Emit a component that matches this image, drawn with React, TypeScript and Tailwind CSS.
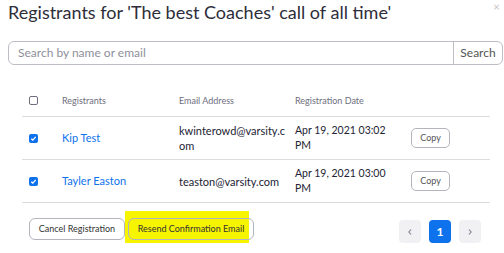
import React from "react";

const Check = ({ checked }: { checked: boolean }) =>
  checked ? (
    <span className="flex h-[9px] w-[9px] items-center justify-center rounded-[2px] bg-[#0e72ed]">
      <svg width="7" height="7" viewBox="0 0 8 8">
        <path d="M1.5 4.2 L3.2 5.8 L6.5 2.2" stroke="white" strokeWidth="1.5" fill="none" />
      </svg>
    </span>
  ) : (
    <span className="block h-[9px] w-[9px] rounded-[2px] border border-[#6e6e7e] bg-white" />
  );

const CopyBtn = () => (
  <button className="flex h-[20px] w-[39px] items-center justify-center rounded-[5px] border border-[#b4b4bc] bg-white text-[9px] text-[#555]">
    Copy
  </button>
);

export default function App() {
  return (
    <div
      className="relative h-[253px] w-[504px] overflow-hidden bg-white text-[#232333]"
      style={{ fontFamily: "Lato, 'Open Sans', sans-serif" }}
    >
      <span className="absolute right-[4px] top-[1px] text-[12px] leading-none text-[#c8c8c8]">×</span>
      <div className="pl-[8px] pt-[1px] text-[18px] leading-[22px] text-[#2e2e3a]">
        Registrants for 'The best Coaches' call of all time'
      </div>
      <div className="ml-[8px] mt-[18px] flex h-[24px] w-[495px] rounded-[6px] border border-[#bdbdc5]">
        <div className="flex flex-1 items-center pl-[9px] text-[12px] text-[#8f8f9a]">Search by name or email</div>
        <div className="flex w-[49px] items-center justify-center border-l border-[#bdbdc5] text-[12px] text-[#555]">
          Search
        </div>
      </div>
      <div className="ml-[22px] mt-[20px] w-[468px]">
        <div className="flex h-[32px] items-center border-b border-[#dcdce0] text-[9px] text-[#6e6e7e]">
          <div className="flex w-[40px] justify-start pl-[7px]">
            <Check checked={false} />
          </div>
          <div className="w-[117px]">Registrants</div>
          <div className="w-[116px]">Email Address</div>
          <div>Registration Date</div>
        </div>
        <div className="flex h-[43px] items-center border-b border-[#dcdce0] text-[11px]">
          <div className="flex w-[40px] justify-start pl-[7px]">
            <Check checked />
          </div>
          <div className="w-[117px] text-[11px] text-[#0e72ed]">Kip Test</div>
          <div className="w-[116px] leading-[15px]">
            kwinterowd@varsity.c
            <br />
            om
          </div>
          <div className="w-[116px] text-[10.5px] leading-[15px]">
            Apr 19, 2021 03:02
            <br />
            PM
          </div>
          <CopyBtn />
        </div>
        <div className="flex h-[43px] items-center border-b border-[#dcdce0] text-[11px]">
          <div className="flex w-[40px] justify-start pl-[7px]">
            <Check checked />
          </div>
          <div className="w-[117px] text-[11px] text-[#0e72ed]">Tayler Easton</div>
          <div className="w-[116px] leading-[15px]">teaston@varsity.com</div>
          <div className="w-[116px] text-[10.5px] leading-[15px]">
            Apr 19, 2021 03:00
            <br />
            PM
          </div>
          <CopyBtn />
        </div>
      </div>
      <div className="ml-[29px] mt-[14px] flex items-start">
        <button className="mt-[1px] flex h-[22px] w-[96px] items-center justify-center rounded-[6px] border border-[#b4b4bc] text-[9px] text-[#333]">
          Cancel Registration
        </button>
        <div className="relative ml-[3px]">
          <div className="absolute left-[-3px] top-[-6px] h-[32px] w-[124px] bg-[#f7f400]" />
          <button className="relative mt-[1px] flex h-[22px] w-[126px] items-center justify-center rounded-[6px] border border-[#b4b4bc] text-[9px] text-[#333]">
            Resend Confirmation Email
          </button>
        </div>
        <div className="ml-[145px] mt-[3px] flex gap-[8px]">
          <div className="flex h-[23px] w-[22px] items-center justify-center rounded-[4px] bg-[#f1f1f4]">
            <svg width="8" height="8" viewBox="0 0 8 8">
              <path d="M5 1.5 L2.8 4 L5 6.5" stroke="#9a9aa6" strokeWidth="1.2" fill="none" />
            </svg>
          </div>
          <div className="flex h-[23px] w-[22px] items-center justify-center rounded-[4px] bg-[#0e72ed] text-[12px] font-bold text-white">
            1
          </div>
          <div className="flex h-[23px] w-[22px] items-center justify-center rounded-[4px] bg-[#f1f1f4]">
            <svg width="8" height="8" viewBox="0 0 8 8">
              <path d="M3 1.5 L5.2 4 L3 6.5" stroke="#9a9aa6" strokeWidth="1.2" fill="none" />
            </svg>
          </div>
        </div>
      </div>
    </div>
  );
}
